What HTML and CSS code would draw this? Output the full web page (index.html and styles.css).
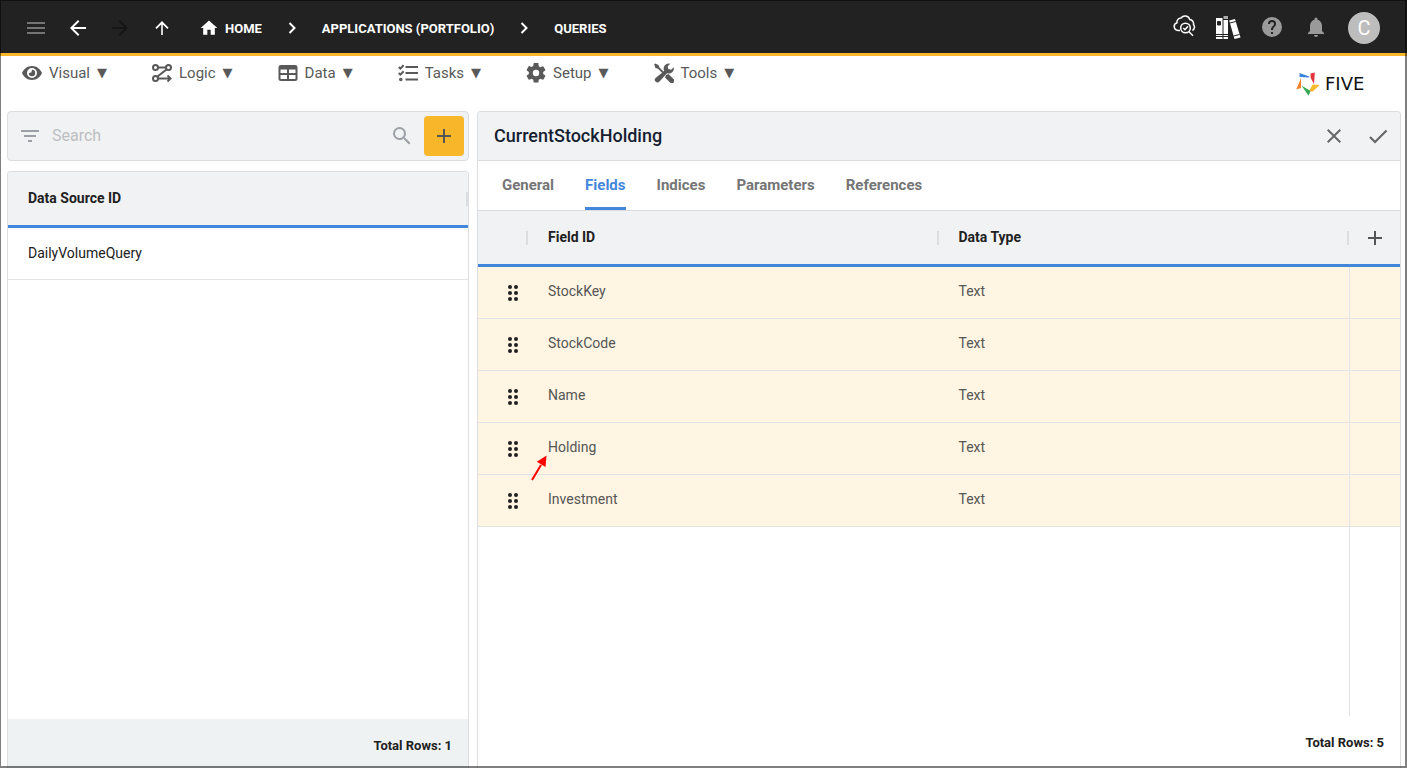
FILE: index.html
```html
<!DOCTYPE html>
<html lang="en">
<head>
    <meta charset="UTF-8">
    <meta name="viewport" content="width=device-width, initial-scale=1.0">
    <title>Five - Queries</title>
    <link rel="stylesheet" href="styles.css">
</head>
<body>
    <!-- Top bar -->
    <header class="topbar">
        <div class="nav-buttons">
            <button class="icon-btn dim" aria-label="Menu"><svg viewBox="0 0 24 24"><path d="M3 18h18v-2H3v2zm0-5h18v-2H3v2zm0-7v2h18V6H3z"/></svg></button>
            <button class="icon-btn" aria-label="Back"><svg viewBox="0 0 24 24"><path d="M20 11H7.8l5.6-5.6L12 4l-8 8 8 8 1.4-1.4L7.8 13H20z"/></svg></button>
            <button class="icon-btn off" aria-label="Forward" disabled><svg viewBox="0 0 24 24"><path d="M4 11h12.2l-5.6-5.6L12 4l8 8-8 8-1.4-1.4 5.6-5.6H4z"/></svg></button>
            <button class="icon-btn" aria-label="Up"><svg viewBox="0 0 24 24"><path d="M11.2 19V8.4l-4.6 4.5-1.2-1.2L12 5.1l6.6 6.6-1.2 1.2-4.6-4.5V19z"/></svg></button>
        </div>
        <nav class="breadcrumb">
            <a href="#"><svg class="home" viewBox="0 0 24 24"><path d="M10 20v-6h4v6h5v-8h3L12 3 2 12h3v8z"/></svg>HOME</a>
            <svg class="chevron" viewBox="0 0 24 24"><path d="M9.500 7l5 5-5 5"/></svg>
            <a href="#">APPLICATIONS (PORTFOLIO)</a>
            <svg class="chevron" viewBox="0 0 24 24"><path d="M9.500 7l5 5-5 5"/></svg>
            <a href="#">QUERIES</a>
        </nav>
        <div class="top-actions">
            <button class="icon-btn" aria-label="Inspect"><svg class="line" viewBox="0 0 24 24"><path d="M8 15.500H6a4 4 0 0 1-1-7.800A4 4 0 0 1 9 3a5 5 0 0 1 8.800 1.500 4.200 4.200 0 0 1 3.700 5A4 4 0 0 1 20.500 15.500"/><circle cx="13.500" cy="13" r="4.800"/><path d="M11.300 13l1.700 1.700 3-3.400M17 16.800l4 4"/></svg></button>
            <button class="icon-btn" aria-label="Library"><svg class="books" viewBox="0 0 26 26"><path d="M1 4h6.500v21H1zM8.500 6H13v19H8.500z"/><path d="M8.500 2H13v3H8.500z" fill="#aaa"/><path d="M14.200 6.500l5.800-1.500L25.500 23.500 19.500 25z"/><path class="cut" d="M2.500 7.500h3v3.500h-3z"/><path class="cut" d="M1 20.500h12M1 22.500h12M14.800 9l6-1.500M18.500 22l6-1.500"/></svg></button>
            <button class="icon-btn grey" aria-label="Help"><svg viewBox="0 0 24 24"><path d="M12 2a10 10 0 1 0 0 20 10 10 0 0 0 0-20zm1 17h-2v-2h2v2zm2.070-7.750l-.9.920C13.450 12.900 13 13.500 13 15h-2v-.5c0-1.100.45-2.100 1.170-2.830l1.240-1.260c.37-.36.590-.86.590-1.410a2 2 0 0 0-4 0H8a4 4 0 0 1 8 0c0 .88-.36 1.680-.93 2.250z"/></svg></button>
            <button class="icon-btn grey" aria-label="Notifications"><svg viewBox="0 0 24 24"><path d="M12 22a2 2 0 0 0 2-2h-4a2 2 0 0 0 2 2zm6-6v-5c0-3.070-1.640-5.640-4.500-6.320V4a1.500 1.500 0 0 0-3 0v.680C7.630 5.360 6 7.920 6 11v5l-2 2v1h16v-1l-2-2z"/></svg></button>
            <button class="avatar">C</button>
        </div>
    </header>

    <!-- Main menu -->
    <div class="menubar">
        <nav class="menu">
            <button><svg viewBox="0 0 20 20"><path fill-rule="evenodd" d="M10 3C5.500 3 1.700 5.800 0 10c1.700 4.200 5.500 7 10 7s8.300-2.800 10-7c-1.700-4.200-5.500-7-10-7zm0 12a5 5 0 1 1 0-10 5 5 0 0 1 0 10z"/><path d="M10 6.800a3.200 3.200 0 1 1-3.200 3.200l2.500-.5z"/></svg>Visual<span class="caret">▼</span></button>
            <button><svg class="line" viewBox="0 0 20 20"><circle cx="3.500" cy="4.500" r="2.500"/><circle cx="16.500" cy="4.500" r="2.500"/><circle cx="3.500" cy="15.500" r="2.500"/><path d="M6 4.500h8M14.500 6.500L5.500 13.500M6 15.500h12M15.500 12.500l3 3-3 3"/></svg>Logic<span class="caret">▼</span></button>
            <button><svg viewBox="0 0 20 20"><path fill-rule="evenodd" d="M3 2h14a2.500 2.500 0 0 1 2.500 2.500v11A2.500 2.500 0 0 1 17 18H3a2.500 2.500 0 0 1-2.500-2.500v-11A2.500 2.500 0 0 1 3 2zm-.5 4.500v3.500H9V6.500zm8.500 0V10h6.500V6.500zM2.500 12v4H9v-4zm8.500 0v4h6.500v-4z"/></svg>Data<span class="caret">▼</span></button>
            <button><svg class="line" viewBox="0 0 20 20"><path d="M7.500 4H20M7.500 10H20M7.500 16.500H20"/><path d="M.8 4l1.600 1.600L5.600 2.200M.8 10l1.600 1.600L5.600 8.200"/><circle cx="2.800" cy="16.500" r=".8"/></svg>Tasks<span class="caret">▼</span></button>
            <button><svg viewBox="2 2 20 20"><path d="M19.140 12.940c.04-.3.060-.61.060-.94s-.02-.64-.07-.94l2.030-1.580a.49.49 0 0 0 .12-.61l-1.920-3.320a.49.49 0 0 0-.59-.22l-2.390.960a7 7 0 0 0-1.620-.94l-.36-2.540A.48.48 0 0 0 13.920 2h-3.840a.47.47 0 0 0-.47.410l-.36 2.540a7.200 7.200 0 0 0-1.620.940l-2.390-.96a.47.47 0 0 0-.59.220L2.740 8.870c-.12.210-.08.470.12.610l2.030 1.580a6 6 0 0 0 0 1.880l-2.030 1.580a.49.49 0 0 0-.12.610l1.920 3.320c.12.220.370.290.590.220l2.390-.96c.5.380 1.030.7 1.620.940l.36 2.540c.05.240.24.410.48.410h3.840c.24 0 .44-.17.470-.41l.36-2.540a7 7 0 0 0 1.620-.94l2.390.96c.22.080.47 0 .59-.22l1.920-3.320a.47.47 0 0 0-.12-.61zM12 15.200a3.200 3.200 0 1 1 0-6.400 3.200 3.200 0 0 1 0 6.400z"/></svg>Setup<span class="caret">▼</span></button>
            <button><svg viewBox="0 0 20 20"><path d="M1 .5L4.500 2l1 2.500 4 4 .7-.7a5 5 0 0 1 6-7l-2.500 2.500.6 2.800 2.800.6L19.600 4.200a5 5 0 0 1-6.600 6L5.500 18.500a2.500 2.500 0 0 1-4-3.500l6.600-5.200-4.100-4L1.500 5 .2 1.500zM12 12l2.500-1 5 5a2.400 2.400 0 0 1-3.500 3.500l-5-5z"/></svg>Tools<span class="caret">▼</span></button>
        </nav>
        <div class="logo">
            <svg viewBox="0 0 24 24"><path fill="#3f84dc" d="M3.500 1l10 3.500-1 1L3.500 5z"/><path fill="#e0353c" d="M14.500 1.500L18.800.5 18 12l-3.300-6z"/><path fill="#f8b92b" d="M16.500 12.500l7.200.5-7 6.500H13z"/><path fill="#35a853" d="M5.500 13.500l9 5.500-2 4.800z"/><path fill="#f5802a" d="M5 6v10L.3 17.500z"/></svg>
            <span>FIVE</span>
        </div>
    </div>

    <main class="content">
        <!-- Query list -->
        <section class="list">
            <div class="search">
                <svg viewBox="0 0 24 24"><path d="M10 18h4v-2h-4v2zM3 6v2h18V6H3zm3 7h12v-2H6v2z"/></svg>
                <input type="text" placeholder="Search" aria-label="Search">
                <svg viewBox="0 0 24 24"><path d="M15.500 14h-.79l-.28-.27A6.470 6.470 0 0 0 16 9.500 6.500 6.500 0 1 0 9.500 16c1.610 0 3.090-.59 4.230-1.570l.27.280v.79l5 4.990L20.490 19l-4.990-5zm-6 0a4.500 4.500 0 1 1 0-9 4.500 4.500 0 0 1 0 9z"/></svg>
                <button class="add" aria-label="Add query"><svg viewBox="0 0 24 24"><path d="M19 13h-6v6h-2v-6H5v-2h6V5h2v6h6z"/></svg></button>
            </div>
            <div class="panel">
                <table>
                    <thead>
                        <tr><th class="sep">Data Source ID</th></tr>
                    </thead>
                    <tbody>
                        <tr><td>DailyVolumeQuery</td></tr>
                    </tbody>
                </table>
                <div class="total total-left">Total Rows: 1</div>
            </div>
        </section>

        <!-- Query form -->
        <section class="panel detail">
            <div class="detail-head">
                <h1>CurrentStockHolding</h1>
                <button class="icon-btn" aria-label="Cancel"><svg viewBox="0 0 24 24"><path d="M19 6.400L17.600 5 12 10.600 6.400 5 5 6.400l5.600 5.600L5 17.600 6.400 19l5.600-5.600 5.600 5.600 1.400-1.400-5.600-5.600z"/></svg></button>
                <button class="icon-btn" aria-label="Save"><svg viewBox="0 0 24 24"><path d="M9 16.500L4.700 12.300l-1.500 1.500L9 19.500 21.300 7.200l-1.500-1.500z"/></svg></button>
            </div>
            <nav class="tabs">
                <a href="#">General</a>
                <a href="#" class="active">Fields</a>
                <a href="#">Indices</a>
                <a href="#">Parameters</a>
                <a href="#">References</a>
            </nav>
            <table class="fields">
                <thead>
                    <tr>
                        <th class="drag sep"></th>
                        <th class="sep">Field ID</th>
                        <th class="sep">Data Type</th>
                        <th class="last"><button class="icon-btn" aria-label="Add field"><svg viewBox="0 0 24 24"><path d="M19 13h-6v6h-2v-6H5v-2h6V5h2v6h6z"/></svg></button></th>
                    </tr>
                </thead>
                <tbody>
                    <tr>
                        <td class="drag"><svg viewBox="0 0 10 16"><use href="#dots"/></svg></td>
                        <td>StockKey</td>
                        <td>Text</td>
                        <td class="last"></td>
                    </tr>
                    <tr>
                        <td class="drag"><svg viewBox="0 0 10 16"><use href="#dots"/></svg></td>
                        <td>StockCode</td>
                        <td>Text</td>
                        <td class="last"></td>
                    </tr>
                    <tr>
                        <td class="drag"><svg viewBox="0 0 10 16"><use href="#dots"/></svg></td>
                        <td>Name</td>
                        <td>Text</td>
                        <td class="last"></td>
                    </tr>
                    <tr>
                        <td class="drag"><svg viewBox="0 0 10 16"><use href="#dots"/></svg></td>
                        <td class="marked">Holding<svg class="pointer" viewBox="0 0 16 26"><path d="M1 25L10 10" stroke="#f00" stroke-width="2"/><path d="M15.500.5L14.500 12 5.800 6.700z" fill="#f00"/></svg></td>
                        <td>Text</td>
                        <td class="last"></td>
                    </tr>
                    <tr>
                        <td class="drag"><svg viewBox="0 0 10 16"><use href="#dots"/></svg></td>
                        <td>Investment</td>
                        <td>Text</td>
                        <td class="last"></td>
                    </tr>
                </tbody>
            </table>
            <div class="filler"></div>
            <div class="total">Total Rows: 5</div>
        </section>
    </main>

    <!-- Shared drag handle -->
    <svg class="defs">
        <defs>
            <g id="dots"><circle cx="2" cy="2" r="2"/><circle cx="8" cy="2" r="2"/><circle cx="2" cy="8" r="2"/><circle cx="8" cy="8" r="2"/><circle cx="2" cy="14" r="2"/><circle cx="8" cy="14" r="2"/></g>
        </defs>
    </svg>
</body>
</html>
```
FILE: styles.css
```css
* {
    box-sizing: border-box;
}

body {
    margin: 0;
    height: 100vh;
    display: flex;
    flex-direction: column;
    overflow: hidden;
    font-family: Roboto, "Liberation Sans", sans-serif;
    font-size: 14px;
    color: #212121;
    background: #fff;
}

/* Window outline */
body::after {
    content: "";
    position: fixed;
    inset: 0;
    border: solid rgba(0, 0, 0, 0.5);
    border-width: 1px 2px 2px 1px;
    pointer-events: none;
}

button {
    border: none;
    background: none;
    padding: 0;
    font: inherit;
    color: inherit;
    cursor: pointer;
}

a {
    color: inherit;
    text-decoration: none;
}

svg {
    display: block;
    flex: none;
    fill: currentColor;
}

svg.line {
    fill: none;
    stroke: currentColor;
    stroke-width: 2;
}

.defs {
    display: none;
}

.icon-btn {
    display: flex;
    align-items: center;
    justify-content: center;
    width: 44px;
    height: 40px;
}

.icon-btn svg {
    width: 24px;
    height: 24px;
}

/* Top bar */
.topbar {
    flex: none;
    display: flex;
    align-items: center;
    height: 56px;
    padding: 0 27px 0 15px;
    background: #222;
    border-bottom: 3px solid #f8b62a;
    color: #fff;
}

.nav-buttons {
    display: flex;
    padding-top: 3px;
}

.nav-buttons .icon-btn {
    width: 42px;
}

.dim {
    color: #757575;
}

.off {
    color: #151515;
}

.breadcrumb {
    display: flex;
    align-items: center;
    gap: 18px;
    padding: 3px 0 0 16px;
    font-size: 13px;
    font-weight: 700;
}

.breadcrumb a {
    display: flex;
    align-items: center;
    gap: 6px;
}

.home {
    width: 20px;
    height: 20px;
}

.chevron {
    width: 24px;
    height: 24px;
    fill: none;
    stroke: currentColor;
    stroke-width: 2;
}

.top-actions {
    display: flex;
    align-items: center;
    margin-left: auto;
}

.top-actions .line {
    stroke-width: 1.5;
}

.top-actions .books {
    width: 26px;
    height: 26px;
}

.cut {
    stroke: #222;
    fill: #222;
}

.grey {
    color: #9a9a9a;
}

.avatar {
    width: 32px;
    height: 32px;
    margin: 2px 0 0 10px;
    border-radius: 50%;
    background: #bdbdbd;
    font-size: 20px;
}

/* Main menu */
.menubar {
    flex: none;
    display: flex;
    justify-content: space-between;
    height: 55px;
    padding: 0 22px;
}

.menu {
    display: flex;
    gap: 45px;
    height: 33px;
    color: #595959;
}

.menu button {
    display: flex;
    align-items: center;
    gap: 7px;
    font-size: 15px;
}

.menu svg {
    width: 20px;
    height: 20px;
}

.caret {
    font-family: "DejaVu Sans", sans-serif;
    font-size: 13px;
}

.logo {
    display: flex;
    align-items: center;
    gap: 5px;
    width: 89px;
    color: #111;
    font-family: "DejaVu Sans", sans-serif;
    font-size: 18px;
}

.logo svg {
    width: 24px;
    height: 24px;
}

/* Two column content */
.content {
    flex: 1;
    display: grid;
    grid-template-columns: 1fr 2fr;
    gap: 8px;
    min-height: 0;
    padding: 0 6px 0 7px;
}

.list {
    display: flex;
    flex-direction: column;
    gap: 10px;
}

.search {
    display: flex;
    align-items: center;
    height: 50px;
    padding: 0 4px 0 10px;
    border: 1px solid #dcdde0;
    border-radius: 4px;
    background: #f1f2f4;
    color: #9aa0a6;
}

.search svg {
    width: 24px;
    height: 24px;
}

.search input {
    flex: 1;
    min-width: 0;
    margin: 0 10px;
    padding: 0 0 2px;
    border: none;
    outline: none;
    background: none;
    font: inherit;
    font-size: 16px;
}

.search input::placeholder {
    color: #bcbec1;
}

.add {
    display: flex;
    align-items: center;
    justify-content: center;
    width: 40px;
    height: 40px;
    margin-left: 10px;
    border-radius: 4px;
    background: #f8b62a;
    color: #555;
}

.panel {
    flex: 1;
    display: flex;
    flex-direction: column;
    border: 1px solid #dcdde0;
    border-bottom: none;
    border-radius: 4px 4px 0 0;
    overflow: hidden;
}

/* Tables */
table {
    width: 100%;
    table-layout: fixed;
    border-collapse: separate;
    border-spacing: 0;
}

th, td {
    padding: 0 20px 2px;
    text-align: left;
}

th {
    height: 56px;
    background-color: #f1f2f4;
    border-bottom: 3px solid #4287db;
    font-weight: 700;
}

td {
    height: 52px;
    border-bottom: 1px solid #e2e3e6;
}

.sep {
    background-image: linear-gradient(#dcdde0, #dcdde0);
    background-repeat: no-repeat;
    background-position: right center;
    background-size: 2px 14px;
}

.fields td {
    padding-bottom: 4px;
    background: #fff5e2;
    color: #555;
}

.fields .drag {
    width: 50px;
    padding: 0 10px 0 30px;
}

.drag svg {
    width: 10px;
    height: 16px;
    color: #212121;
}

.fields .last {
    width: 51px;
    padding: 0;
}

td.last {
    border-left: 1px solid #e2e3e6;
}

.last .icon-btn {
    width: 51px;
    color: #555;
}

.marked {
    position: relative;
}

/* Red arrow laid over the cell */
.pointer {
    position: absolute;
    left: 3px;
    top: 32px;
    width: 16px;
    height: 26px;
}

.filler {
    flex: 1;
    width: 51px;
    margin-left: auto;
    border-left: 1px solid #e2e3e6;
}

.total {
    height: 52px;
    padding: 0 16px;
    line-height: 54px;
    text-align: right;
    font-size: 13px;
    font-weight: 700;
}

.total-left {
    height: 49px;
    margin-top: auto;
    background: #eef2f3;
}

/* Query form */
.detail-head {
    display: flex;
    align-items: center;
    height: 49px;
    padding-left: 16px;
    background: #f1f2f4;
    border-bottom: 1px solid #dcdde0;
    color: #666;
}

.detail-head h1 {
    flex: 1;
    margin: 0;
    padding-bottom: 2px;
    font-size: 18px;
    font-weight: 500;
    color: #161e31;
}

.tabs {
    display: flex;
    gap: 31px;
    height: 50px;
    padding: 0 24px;
    border-bottom: 1px solid #dcdde0;
    color: #757575;
    font-size: 15px;
    font-weight: 700;
    line-height: 49px;
}

.tabs .active {
    color: #4287db;
    border-bottom: 3px solid #4287db;
}
```
